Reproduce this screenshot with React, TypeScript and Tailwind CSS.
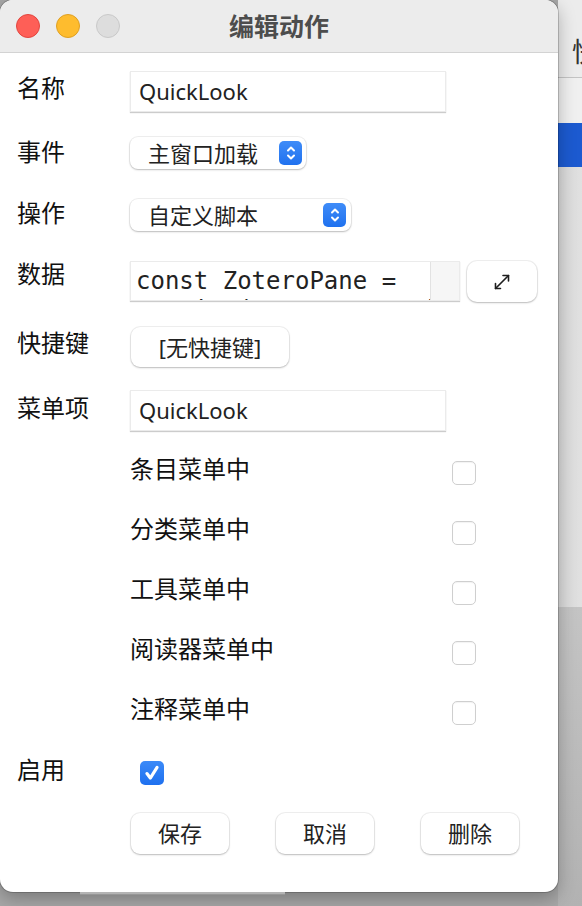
import type { ReactNode } from 'react'

const sans = "font-['Noto_Sans','Noto_Sans_CJK_SC',sans-serif]"

function Stepper() {
  return (
    <span className="flex h-[24px] w-[23px] items-center justify-center rounded-[5px] bg-gradient-to-b from-[#3f8cf8] to-[#1f71ef]">
      <svg width="12" height="18" viewBox="0 0 12 18" fill="none" stroke="#fff" strokeWidth="2" strokeLinecap="round" strokeLinejoin="round">
        <path d="M3 6.5 6 3.5 9 6.5" />
        <path d="M3 11.5 6 14.5 9 11.5" />
      </svg>
    </span>
  )
}

function Checkbox({ checked = false }: { checked?: boolean }) {
  if (checked) {
    return (
      <span className="flex h-[24px] w-[24px] items-center justify-center rounded-[5px] bg-gradient-to-b from-[#3b8af8] to-[#1e70ef]">
        <svg width="18" height="18" viewBox="0 0 16 16" fill="none" stroke="#fff" strokeWidth="2.8" strokeLinecap="round" strokeLinejoin="round">
          <path d="M3.5 8.5 6.5 12.5 12.5 3" />
        </svg>
      </span>
    )
  }
  return (
    <span className="block h-[24px] w-[24px] rounded-[5px] border border-[#cfcfcf] bg-white shadow-[inset_0_1px_1px_rgba(0,0,0,0.05)]" />
  )
}

function Row({ label, labelClass, children, className }: { label: string; labelClass: string; children: ReactNode; className: string }) {
  return (
    <div className={`flex items-start ${className}`}>
      <div className={`w-[113px] shrink-0 text-[24px] leading-6 text-[#111] ${labelClass}`}>{label}</div>
      {children}
    </div>
  )
}

const field = 'flex items-center border border-[#ebebeb] bg-white shadow-[0_1px_1px_rgba(0,0,0,0.2)]'
const popup = 'flex items-center rounded-[8px] bg-white shadow-[0_0_0_1px_rgba(0,0,0,0.06),0_1px_2px_rgba(0,0,0,0.22)]'

const menus = ['条目菜单中', '分类菜单中', '工具菜单中', '阅读器菜单中', '注释菜单中']

export default function App() {
  return (
    <div className={`flex h-[906px] w-[582px] items-start overflow-hidden bg-[#a7a7a7] ${sans}`}>
      <div className="relative z-10 flex w-[558px] shrink-0 flex-col">
        <div className="flex h-[892px] flex-col overflow-hidden rounded-[13px] bg-white shadow-[0_0_0_1px_rgba(0,0,0,0.18),0_6px_18px_rgba(0,0,0,0.28)]">
          {/* title bar */}
          <div className="grid h-[53px] shrink-0 grid-cols-[1fr_auto_1fr] items-center border-b border-[#d3d3d3] bg-[#ececec]">
            <div className="flex gap-[16px] pl-[16px]">
              <span className="h-[24px] w-[24px] rounded-full border border-[#e2463f] bg-[#fe5f57]" />
              <span className="h-[24px] w-[24px] rounded-full border border-[#dfa023] bg-[#febc2e]" />
              <span className="h-[24px] w-[24px] rounded-full border border-[#c9c9c9] bg-[#dddddd]" />
            </div>
            <div className="text-[25px] font-bold leading-none text-[#4d4d4d]">编辑动作</div>
            <div />
          </div>

          <div className="flex flex-col pl-[17px]">
            <Row label="名称" labelClass="pt-[5px]" className="mt-[18px]">
              <div className={`${field} h-[41px] w-[316px] pl-[8px] text-[22px] text-[#222]`}>QuickLook</div>
            </Row>

            <Row label="事件" labelClass="pt-[3px]" className="mt-[25px]">
              <div className={`${popup} h-[32px] w-[176px] justify-between pl-[18px] pr-[4px] text-[22px] text-[#222]`}>
                <span>主窗口加载</span>
                <Stepper />
              </div>
            </Row>

            <Row label="操作" labelClass="pt-[2px]" className="mt-[30px]">
              <div className={`${popup} h-[32px] w-[221px] justify-between pl-[18px] pr-[5px] text-[22px] text-[#222]`}>
                <span>自定义脚本</span>
                <Stepper />
              </div>
            </Row>

            <Row label="数据" labelClass="pt-[1px]" className="mt-[30px]">
              <div className="flex items-start gap-[7px]">
                <div className={`${field} h-[40px] w-[330px] items-stretch overflow-hidden`}>
                  <div className="flex-1 overflow-hidden whitespace-pre pl-[5px] pt-[5px] font-['DejaVu_Sans_Mono',monospace] text-[24px] leading-[29px] text-[#222]">
                    {'const ZoteroPane =\nrequire("ZoteroPane");'}
                  </div>
                  <div className="w-[29px] border-l border-[#e2e2e2] bg-[#f6f6f6]" />
                </div>
                <div className={`${popup} h-[41px] w-[70px] justify-center rounded-[10px]`}>
                  <svg width="20" height="20" viewBox="0 0 20 20" fill="none" stroke="#1e1e1e" strokeWidth="1.6" strokeLinecap="round" strokeLinejoin="round">
                    <path d="M3.5 16.5 16.5 3.5" />
                    <path d="M11 3.5h5.5V9" />
                    <path d="M3.5 11.5v5h5" />
                  </svg>
                </div>
              </div>
            </Row>

            <Row label="快捷键" labelClass="pt-[4px]" className="mt-[25px]">
              <div className={`${popup} ml-[1px] h-[40px] w-[158px] justify-center rounded-[9px] text-[22px] text-[#222]`}>
                [无快捷键]
              </div>
            </Row>

            <Row label="菜单项" labelClass="pt-[6px]" className="mt-[23px]">
              <div className={`${field} h-[41px] w-[316px] pl-[8px] text-[22px] text-[#222]`}>QuickLook</div>
            </Row>

            <div className="mt-[30px] flex flex-col gap-[36px] pl-[113px]">
              {menus.map((m) => (
                <div key={m} className="flex h-[24px] items-start">
                  <div className="-mt-[4px] w-[322px] text-[24px] leading-6 text-[#111]">{m}</div>
                  <Checkbox />
                </div>
              ))}
            </div>

            <div className="mt-[36px] flex h-[24px] items-start">
              <div className="-mt-[3px] w-[123px] text-[24px] leading-6 text-[#111]">启用</div>
              <Checkbox checked />
            </div>

            <div className="mt-[28px] flex gap-[47px] pl-[114px]">
              {['保存', '取消', '删除'].map((b) => (
                <div key={b} className={`${popup} h-[41px] w-[98px] justify-center rounded-[9px] text-[22px] text-[#222]`}>
                  {b}
                </div>
              ))}
            </div>
          </div>
        </div>
        <div className="h-[14px]">
          <div className="ml-[80px] h-[3px] w-[205px] border-b border-[#979797] bg-[#b4b4b4]" />
        </div>
      </div>

      {/* background window peeking on the right */}
      <div className="flex h-[906px] flex-1 flex-col">
        <div className="h-[77px] overflow-hidden bg-[#ececec] pl-[14px] pt-[38px] text-[27px] leading-7 text-[#333]">快</div>
        <div className="h-[1px] bg-[#c4c4c4]" />
        <div className="h-[45px] bg-[#f0f0f0]" />
        <div className="h-[44px] bg-[#1c5ad0]" />
        <div className="h-[440px] bg-gradient-to-r from-[#d9d9d9] to-[#e6e6e6]" />
        <div className="flex-1 bg-gradient-to-b from-[#c4c4c4] to-[#b2b2b2]" />
      </div>
    </div>
  )
}
